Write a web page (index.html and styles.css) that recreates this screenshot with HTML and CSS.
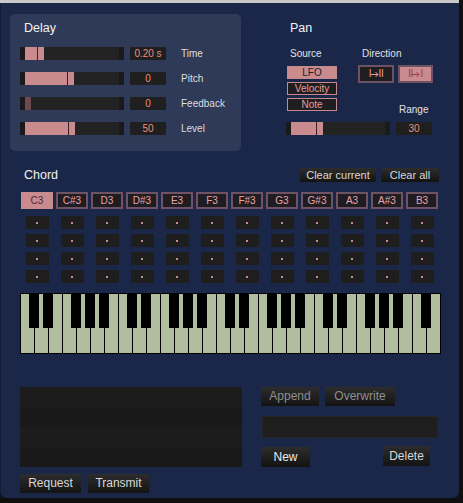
FILE: index.html
```html
<!DOCTYPE html>
<html>
<head>
<meta charset="utf-8">
<title>Chord Delay</title>
<link rel="stylesheet" href="styles.css">
</head>
<body>
<div class="topstrip"></div>
<div class="app">
  <div class="top">
    <section class="delay">
      <h2 class="title">Delay</h2>
      <div class="params">
        <div class="param">
          <div class="slider"><div class="track"><div class="fill" style="width:19px"></div></div></div>
          <div class="num">0.20 s</div>
          <div class="plabel">Time</div>
        </div>
        <div class="param">
          <div class="slider"><div class="track"><div class="fill" style="width:49px"></div></div></div>
          <div class="num">0</div>
          <div class="plabel">Pitch</div>
        </div>
        <div class="param">
          <div class="slider"><div class="track"><div class="fill dim" style="width:6px"></div></div></div>
          <div class="num">0</div>
          <div class="plabel">Feedback</div>
        </div>
        <div class="param">
          <div class="slider"><div class="track"><div class="fill" style="width:50px"></div></div></div>
          <div class="num">50</div>
          <div class="plabel">Level</div>
        </div>
      </div>
    </section>
    <section class="pan">
      <h2 class="title pan-title">Pan</h2>
      <div class="pan-body">
        <div class="source">
          <div class="sublabel">Source</div>
          <div class="src-buttons">
            <div class="tog on">LFO</div>
            <div class="tog">Velocity</div>
            <div class="tog">Note</div>
          </div>
        </div>
        <div class="direction">
          <div class="sublabel dir-label">Direction</div>
          <div class="dir-buttons">
            <div class="dir"><span>I</span><svg class="arrow" width="8" height="7" viewBox="0 0 8 7"><path d="M0 3.5H7M4.5 1L7 3.5L4.5 6" fill="none" stroke="currentColor" stroke-width="1"/></svg><span>II</span></div>
            <div class="dir on"><span>II</span><svg class="arrow" width="8" height="7" viewBox="0 0 8 7"><path d="M0 3.5H7M4.5 1L7 3.5L4.5 6" fill="none" stroke="currentColor" stroke-width="1"/></svg><span>I</span></div>
          </div>
          <div class="sublabel range-label">Range</div>
        </div>
      </div>
      <div class="param pan-param">
        <div class="slider"><div class="track"><div class="fill" style="width:32px"></div></div></div>
        <div class="num">30</div>
      </div>
    </section>
  </div>

  <div class="chord-head">
    <h2 class="title">Chord</h2>
    <div class="chord-actions">
      <button class="btn clear-current">Clear current</button>
      <button class="btn clear-all">Clear all</button>
    </div>
  </div>

  <div class="notes">
    <div class="note on">C3</div>
    <div class="note">C#3</div>
    <div class="note">D3</div>
    <div class="note">D#3</div>
    <div class="note">E3</div>
    <div class="note">F3</div>
    <div class="note">F#3</div>
    <div class="note">G3</div>
    <div class="note">G#3</div>
    <div class="note">A3</div>
    <div class="note">A#3</div>
    <div class="note">B3</div>
  </div>

  <div class="dots">
    <div class="dot"></div><div class="dot"></div><div class="dot"></div><div class="dot"></div><div class="dot"></div><div class="dot"></div><div class="dot"></div><div class="dot"></div><div class="dot"></div><div class="dot"></div><div class="dot"></div><div class="dot"></div>
    <div class="dot"></div><div class="dot"></div><div class="dot"></div><div class="dot"></div><div class="dot"></div><div class="dot"></div><div class="dot"></div><div class="dot"></div><div class="dot"></div><div class="dot"></div><div class="dot"></div><div class="dot"></div>
    <div class="dot"></div><div class="dot"></div><div class="dot"></div><div class="dot"></div><div class="dot"></div><div class="dot"></div><div class="dot"></div><div class="dot"></div><div class="dot"></div><div class="dot"></div><div class="dot"></div><div class="dot"></div>
    <div class="dot"></div><div class="dot"></div><div class="dot"></div><div class="dot"></div><div class="dot"></div><div class="dot"></div><div class="dot"></div><div class="dot"></div><div class="dot"></div><div class="dot"></div><div class="dot"></div><div class="dot"></div>
  </div>

  <div class="keyboard">
    <svg width="421" height="61" viewBox="0 0 421 61" xmlns="http://www.w3.org/2000/svg">
      <rect x="0" y="0" width="421" height="61" fill="#000"/>
      <g fill="#b0bd9f">
        <rect x="1" y="1" width="13" height="59"/><rect x="15" y="1" width="13" height="59"/><rect x="29" y="1" width="13" height="59"/><rect x="43" y="1" width="13" height="59"/><rect x="57" y="1" width="13" height="59"/><rect x="71" y="1" width="13" height="59"/><rect x="85" y="1" width="13" height="59"/>
        <rect x="99" y="1" width="13" height="59"/><rect x="113" y="1" width="13" height="59"/><rect x="127" y="1" width="13" height="59"/><rect x="141" y="1" width="13" height="59"/><rect x="155" y="1" width="13" height="59"/><rect x="169" y="1" width="13" height="59"/><rect x="183" y="1" width="13" height="59"/>
        <rect x="197" y="1" width="13" height="59"/><rect x="211" y="1" width="13" height="59"/><rect x="225" y="1" width="13" height="59"/><rect x="239" y="1" width="13" height="59"/><rect x="253" y="1" width="13" height="59"/><rect x="267" y="1" width="13" height="59"/><rect x="281" y="1" width="13" height="59"/>
        <rect x="295" y="1" width="13" height="59"/><rect x="309" y="1" width="13" height="59"/><rect x="323" y="1" width="13" height="59"/><rect x="337" y="1" width="13" height="59"/><rect x="351" y="1" width="13" height="59"/><rect x="365" y="1" width="13" height="59"/><rect x="379" y="1" width="13" height="59"/>
        <rect x="393" y="1" width="13" height="59"/><rect x="407" y="1" width="13" height="59"/>
      </g>
      <g fill="#000">
        <rect x="9" y="0" width="10" height="35"/><rect x="23" y="0" width="10" height="35"/><rect x="51" y="0" width="10" height="35"/><rect x="65" y="0" width="10" height="35"/><rect x="79" y="0" width="10" height="35"/>
        <rect x="107" y="0" width="10" height="35"/><rect x="121" y="0" width="10" height="35"/><rect x="149" y="0" width="10" height="35"/><rect x="163" y="0" width="10" height="35"/><rect x="177" y="0" width="10" height="35"/>
        <rect x="205" y="0" width="10" height="35"/><rect x="219" y="0" width="10" height="35"/><rect x="247" y="0" width="10" height="35"/><rect x="261" y="0" width="10" height="35"/><rect x="275" y="0" width="10" height="35"/>
        <rect x="303" y="0" width="10" height="35"/><rect x="317" y="0" width="10" height="35"/><rect x="345" y="0" width="10" height="35"/><rect x="359" y="0" width="10" height="35"/><rect x="373" y="0" width="10" height="35"/>
        <rect x="401" y="0" width="10" height="35"/>
      </g>
    </svg>
  </div>

  <div class="bottom">
    <div class="left-col">
      <div class="list">
        <div class="list-row"></div>
        <div class="list-row alt"></div>
        <div class="list-row"></div>
        <div class="list-row alt"></div>
      </div>
      <div class="btn-row">
        <button class="btn big w-request">Request</button>
        <button class="btn big w-transmit">Transmit</button>
      </div>
    </div>
    <div class="right-col">
      <div class="btn-row right-top">
        <button class="btn big muted w-append">Append</button>
        <button class="btn big muted w-overwrite">Overwrite</button>
      </div>
      <div class="textfield"></div>
      <div class="btn-row right-bottom">
        <button class="btn big bright w-new">New</button>
        <button class="btn big w-delete">Delete</button>
      </div>
    </div>
  </div>
</div>
</body>
</html>
```

FILE: styles.css
```css
* { box-sizing: border-box; }

html, body {
  margin: 0;
  padding: 0;
  background: #0f0f10;
  font-family: "Liberation Sans", Arial, sans-serif;
}

.topstrip {
  width: 459px;
  height: 3px;
  background: #c9c9c9;
}

.app {
  width: 459px;
  height: 495px;
  background: #1b2748;
  border-radius: 0 0 6px 6px;
  box-shadow: inset 1px 0 0 #141d38;
  overflow: hidden;
}

.title {
  margin: 0;
  font-size: 12.5px;
  line-height: 16px;
  font-weight: normal;
  color: #f2f2f2;
}

/* ---------- top ---------- */
.top {
  display: flex;
  padding-top: 11px;
}

.delay {
  margin-left: 10px;
  width: 231px;
  height: 137px;
  background: #2e3a57;
  border-radius: 5px;
  padding-top: 6px;
}

.delay .title { margin-left: 14px; }

.params {
  margin-top: 11px;
  margin-left: 10px;
  display: flex;
  flex-direction: column;
  gap: 12px;
}

.param {
  display: flex;
  align-items: center;
  height: 13px;
}

.slider {
  width: 104px;
  height: 13px;
  background: #1a1a1a;
  padding: 0 5px;
}

.track {
  height: 100%;
  background: #232323;
}

.fill {
  height: 100%;
  background: linear-gradient(to left, #c98b8d 6px, #3a2226 6px, #3a2226 7px, #c98b8d 7px);
}

.fill.dim { background: #6c4a52; }

.num {
  width: 36px;
  height: 13px;
  margin-left: 6px;
  background: #1f1f1f;
  color: #ea8f7e;
  font-size: 10px;
  line-height: 13px;
  text-align: center;
}

.plabel {
  margin-left: 15px;
  font-size: 10px;
  color: #dedede;
}

/* ---------- pan ---------- */
.pan {
  margin-left: 45px;
  padding-top: 6px;
  display: flex;
  flex-direction: column;
}

.pan-title { padding-left: 4px; }

.pan-body {
  display: flex;
  margin-top: 12px;
  height: 68px;
}

.sublabel {
  font-size: 10px;
  line-height: 12px;
  color: #e2e2e2;
}

.source {
  margin-left: 1px;
  width: 50px;
}

.source .sublabel { padding-left: 3px; }

.src-buttons {
  margin-top: 6px;
  display: flex;
  flex-direction: column;
  gap: 3px;
}

.tog {
  width: 50px;
  height: 13px;
  border: 1px solid #c68a8e;
  background: #1e1d20;
  color: #e79d9c;
  font-size: 10px;
  line-height: 11px;
  text-align: center;
}

.tog.on {
  background: #c98b8d;
  color: #1d1b2a;
}

.direction { margin-left: 21px; }

.dir-label { padding-left: 4px; }

.dir-buttons {
  display: flex;
  gap: 4px;
  margin-top: 5px;
}

.dir {
  width: 36px;
  height: 18px;
  border: 2px solid #6d5264;
  background: #1e1d20;
  color: #ec9f9e;
  font-size: 10px;
  line-height: 14px;
  display: flex;
  align-items: center;
  justify-content: center;
  letter-spacing: -0.5px;
}

.dir .arrow {
  display: block;
  margin: 0 0 0 -0.5px;
}

.dir.on {
  width: 35px;
  background: #c98b8d;
  color: #a03c48;
}

.range-label {
  margin-top: 21px;
  padding-left: 41px;
}

.pan-param { margin-top: 6px; }

/* ---------- chord ---------- */
.chord-head {
  display: flex;
  align-items: center;
  height: 16px;
  margin-top: 16px;
  padding-left: 24px;
  padding-right: 20px;
}

.chord-actions {
  margin-left: auto;
  display: flex;
  gap: 5px;
}

.btn {
  border: none;
  padding: 0;
  margin: 0;
  border-radius: 1px;
  background: linear-gradient(#2d2d2d, #131313);
  color: #d8d8d8;
  font-family: "Liberation Sans", Arial, sans-serif;
  font-size: 11px;
  text-align: center;
}

.clear-current { width: 76px; height: 14px; line-height: 14px; }
.clear-all { width: 58px; height: 14px; line-height: 14px; }

.notes {
  display: grid;
  grid-template-columns: repeat(12, 32px);
  column-gap: 3px;
  margin-top: 9px;
  padding-left: 21px;
}

.note {
  height: 17px;
  border: 2px solid #6f5365;
  background: #1f1d21;
  color: #e9a4a8;
  font-size: 10px;
  line-height: 13px;
  text-align: center;
}

.note.on {
  background: #c98b8d;
  border-color: #c98b8d;
  color: #4a2a32;
}

.dots {
  display: grid;
  grid-template-columns: repeat(12, 32px);
  column-gap: 3px;
  row-gap: 5px;
  margin-top: 7px;
  padding-left: 21px;
}

.dot {
  justify-self: center;
  width: 23px;
  height: 13px;
  background: #1e1e1e;
  display: flex;
  align-items: center;
  justify-content: center;
}

.dot::after {
  content: "";
  width: 2px;
  height: 2px;
  background: #c98b8d;
}

.keyboard {
  margin-top: 10px;
  margin-left: 20px;
  height: 61px;
}

.keyboard svg { display: block; }

/* ---------- bottom ---------- */
.bottom {
  display: flex;
  margin-top: 33px;
}

.left-col { padding-left: 20px; }

.list {
  width: 222px;
  height: 80px;
  display: flex;
  flex-direction: column;
}

.list-row { flex: 1; background: #1c1c1c; }
.list-row.alt { background: #191919; }

.btn-row {
  display: flex;
  gap: 7px;
  margin-top: 7px;
}

.btn.big {
  height: 19px;
  font-size: 12px;
  line-height: 19px;
}

.btn.muted { color: #8f8f8f; }
.btn.bright { color: #ececec; }

.w-request { width: 61px; }
.w-transmit { width: 61px; }

.right-col {
  margin-left: 19px;
}

.right-top {
  margin-top: 0;
  gap: 6px;
}

.w-append { width: 58px; }
.w-overwrite { width: 70px; }

.textfield {
  margin-top: 10px;
  margin-left: 1px;
  width: 176px;
  height: 22px;
  background: #1e1e1e;
  border: 1px solid #262626;
}

.right-bottom {
  margin-top: 9px;
  width: 169px;
  align-items: flex-start;
}

.w-new { width: 49px; height: 20px !important; line-height: 20px !important; }
.w-delete {
  width: 47px;
  margin-left: auto;
  margin-top: -1px;
  height: 20px !important;
  line-height: 20px !important;
}
```
